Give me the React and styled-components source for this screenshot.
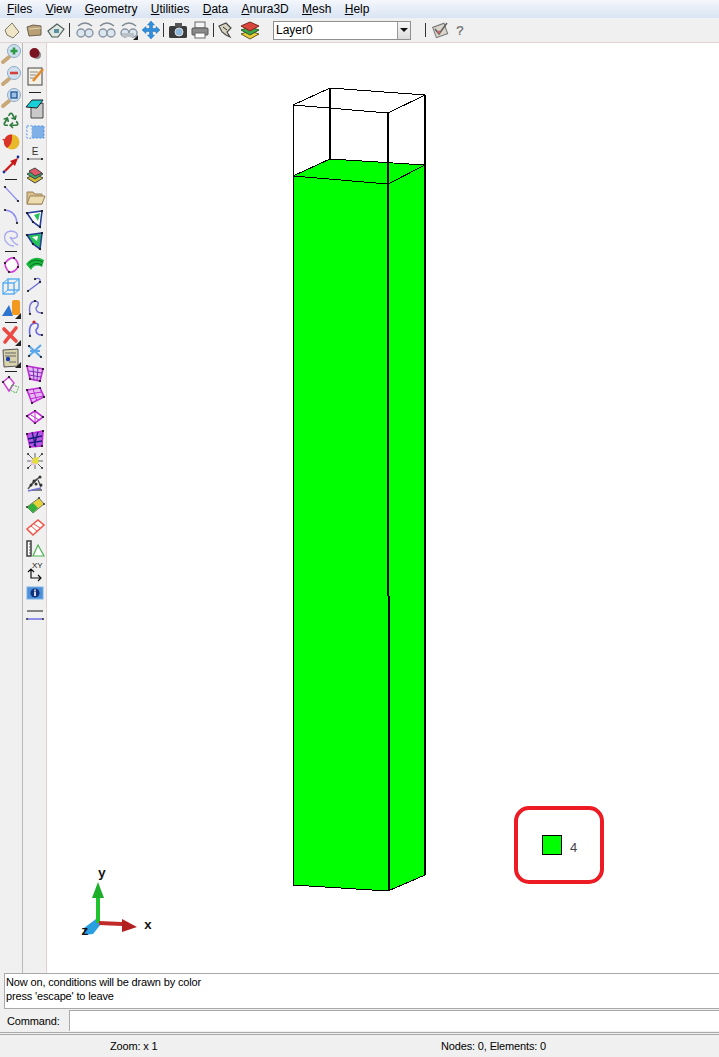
import React from 'react';
import styled, { createGlobalStyle } from 'styled-components';
import { Recycle } from 'lucide-react';

const GlobalStyle = createGlobalStyle`
  html, body {
    margin: 0;
    padding: 0;
    background: #f0f0f0;
    overflow: hidden;
  }
  body {
    font-family: "Liberation Sans", Arial, sans-serif;
  }
`;

const Window = styled.div`
  display: flex;
  flex-direction: column;
  width: 719px;
  height: 1057px;
  background: #f0f0f0;
  color: #000;
`;

const MenuBar = styled.div`
  display: flex;
  align-items: center;
  gap: 13.3px;
  height: 18px;
  padding-left: 7px;
  font-size: 12px;
  background: linear-gradient(#f4f7fc, #d9e4f3);
`;

const MenuItem = styled.span`
  &::first-letter {
    text-decoration: underline;
  }
  display: inline-block;
`;

const Toolbar = styled.div`
  display: flex;
  align-items: center;
  height: 24px;
  padding-left: 1px;
  background: #f0f0f0;
  border-bottom: 1px solid #e3d4d4;
`;

const ToolButton = styled.div`
  display: flex;
  align-items: center;
  justify-content: center;
  flex: none;
  width: ${p => p.$w || 22}px;
  height: 22px;
  margin-left: ${p => p.$ml || 0}px;
`;

const ToolSep = styled.div`
  flex: none;
  width: 1px;
  height: 14px;
  background: #333;
  margin: 0 ${p => p.$r || 0}px 0 ${p => p.$l || 0}px;
`;

const Combo = styled.div`
  display: flex;
  flex: none;
  width: 138px;
  height: 19px;
  margin: 0 14px 0 12px;
  box-sizing: border-box;
  border: 1px solid #8f8f8f;
  background: #fff;
  font-size: 12px;
`;

const ComboText = styled.div`
  flex: 1;
  padding-left: 2px;
  line-height: 17px;
`;

const ComboArrow = styled.div`
  display: flex;
  align-items: center;
  justify-content: center;
  width: 12px;
  background: linear-gradient(#f6f6f6, #dcdcdc);
  border-left: 1px solid #9a9a9a;
  &::after {
    content: '';
    border-left: 4px solid transparent;
    border-right: 4px solid transparent;
    border-top: 4px solid #111;
  }
`;

const Body = styled.div`
  display: flex;
  flex: 1;
  min-height: 0;
`;

const SideColumn = styled.div`
  display: flex;
  flex-direction: column;
  align-items: center;
  flex: none;
  width: ${p => p.$w}px;
  box-sizing: border-box;
  border-right: 1px solid ${p => p.$edge};
`;

const SideIcon = styled.div`
  display: flex;
  align-items: center;
  justify-content: center;
  flex: none;
  width: 22px;
  height: 22px;
`;

const SideSep = styled.div`
  flex: none;
  display: flex;
  align-items: center;
  justify-content: center;
  height: ${p => p.$h}px;
  &::after {
    content: '';
    width: 12px;
    height: 1px;
    background: #222;
  }
`;

const Canvas = styled.div`
  position: relative;
  flex: 1;
  background: #fff;
  overflow: hidden;
`;

const Scene = styled.svg`
  display: block;
  width: 672px;
  height: 930px;
`;

const Legend = styled.div`
  position: absolute;
  left: 467px;
  top: 763px;
  display: flex;
  align-items: center;
  gap: 8px;
  width: 90px;
  height: 78px;
  padding-left: 24px;
  box-sizing: border-box;
  border: 4px solid #ed1c24;
  border-radius: 15px;
  background: #fff;
`;

const Swatch = styled.div`
  width: 20px;
  height: 20px;
  box-sizing: border-box;
  border: 1px solid #000;
  background: #00ff00;
`;

const LegendText = styled.span`
  font-size: 13px;
  color: #444;
  padding-top: 5px;
`;

const Messages = styled.div`
  height: 36px;
  margin-left: 4px;
  padding: 1px 0 0 1px;
  box-sizing: border-box;
  background: #fff;
  border-top: 1px solid #a9a9a9;
  border-left: 1px solid #a9a9a9;
  border-bottom: 1px solid #a9a9a9;
  font-size: 11px;
  letter-spacing: -0.15px;
  line-height: 14px;
`;

const CommandRow = styled.div`
  display: flex;
  align-items: center;
  height: 23px;
  padding-left: 7px;
  font-size: 11px;
  letter-spacing: -0.15px;
`;

const CommandLabel = styled.label`
  width: 62px;
`;

const CommandInput = styled.div`
  flex: 1;
  height: 20px;
  background: #fff;
  border-top: 1px solid #a9a9a9;
  border-left: 1px solid #a9a9a9;
`;

const StatusBar = styled.div`
  display: flex;
  align-items: center;
  height: 25px;
  box-sizing: border-box;
  border-top: 3px double #a9a9a9;
  font-size: 11px;
  letter-spacing: -0.15px;
`;

const StatusZoom = styled.span`
  margin-left: 110px;
  width: 331px;
`;

const Ico = styled.svg`
  display: block;
  width: 22px;
  height: 22px;
`;

const Dots = ({ pts, r = 1.1, fill = '#111' }) =>
  pts.map(([x, y]) => <circle key={x + '-' + y} cx={x} cy={y} r={r} fill={fill} />);

const Corner = () => <polygon points="21,15 21,21 15,21" fill="#222" />;

const Lens = ({ children }) => (
  <>
    <path d="M3 19 L9 14" stroke="#c9a878" strokeWidth="4" strokeLinecap="round" />
    <circle cx="14" cy="8" r="6.5" fill="#cfe0ee" stroke="#8fa9c4" />
    {children}
  </>
);

const Glasses = ({ dir }) => (
  <>
    <path d={dir === 'l' ? 'M4 7 Q11 1 18 7' : 'M18 7 Q11 1 4 7'} fill="none" stroke="#7f8b96" strokeWidth="1.5" />
    <circle cx="7" cy="14" r="4" fill="#dbe6ef" stroke="#8995a3" strokeWidth="1.4" />
    <circle cx="15" cy="14" r="4" fill="#dbe6ef" stroke="#8995a3" strokeWidth="1.4" />
  </>
);

const Mesh = ({ stroke = '#c02bd6', fill = '#e4b8f0', pts }) => (
  <>
    <polygon points={pts} fill={fill} stroke={stroke} strokeWidth="1.6" />
    <Dots pts={pts.split(' ').map(p => p.split(',').map(Number))} />
  </>
);

const glyphs = {
  // top toolbar
  newFile: <><polygon points="4,11 11,4 18,13 12,19 6,16" fill="#efe6c8" stroke="#7d7a68" /></>,
  open: <><polygon points="4,8 10,6 18,7 18,16 6,17" fill="#b89f74" stroke="#6d6150" /><path d="M6 10 L18 9" stroke="#e0d2b0" /></>,
  save: <><polygon points="3,12 12,5 19,10 13,18 7,18" fill="#dfe7e2" stroke="#4a5a55" strokeWidth="1.1" /><rect x="9" y="10" width="5" height="4" fill="#5a8f9f" /></>,
  undo: <Glasses dir="l" />,
  redo: <Glasses dir="r" />,
  view: <><Glasses dir="l" /><rect x="4" y="14" width="12" height="4" fill="#b9c0c6" /><polygon points="20,16 20,21 15,21" fill="#222" /></>,
  move: <path d="M11 2 L14.5 6 H12.5 V9.5 H16 V7.5 L20 11 L16 14.5 V12.5 H12.5 V16 H14.5 L11 20 L7.5 16 H9.5 V12.5 H6 V14.5 L2 11 L6 7.5 V9.5 H9.5 V6 H7.5 Z" fill="#2f8fdc" stroke="#1c6cb0" strokeWidth="0.5" />,
  camera: <><rect x="2" y="7" width="18" height="12" rx="1.5" fill="#3b3b3b" /><rect x="8" y="4" width="7" height="4" fill="#555" /><circle cx="12" cy="13" r="4" fill="#8fb8dc" stroke="#ddd" /></>,
  printer: <><rect x="6" y="3" width="10" height="6" fill="#f4f4f4" stroke="#666" /><rect x="3" y="9" width="16" height="7" rx="1" fill="#8a8a8a" stroke="#555" /><rect x="6" y="14" width="10" height="5" fill="#fff" stroke="#666" /></>,
  tool: <><path d="M5 7 L12 4 L17 9 L13 13 L16 18 L12 16 L8 13 Z" fill="#d9d4c0" stroke="#444" strokeWidth="1.1" /><path d="M9 8 L13 11" stroke="#333" /></>,
  layers: <><polygon points="11,12 20,15 11,20 2,15" fill="#e8c93a" stroke="#665c22" /><polygon points="11,8 20,11 11,16 2,11" fill="#3fa648" stroke="#245c2a" /><polygon points="11,3 20,7 11,12 2,7" fill="#d9473c" stroke="#7a2620" /></>,
  check: <><rect x="5" y="6" width="12" height="11" fill="#d9d5cb" stroke="#777" transform="rotate(-20 11 11)" /><path d="M6 10 L10 15 L18 4" fill="none" stroke="#5f5f5f" strokeWidth="1.5" /><circle cx="10" cy="13" r="1.5" fill="#c66" /></>,

  // left column
  zoomIn: <Lens><path d="M14 4.5 V11.5 M10.5 8 H17.5" stroke="#2f9a45" strokeWidth="2.6" /></Lens>,
  zoomOut: <Lens><path d="M10 8 H18" stroke="#d4413c" strokeWidth="2.6" /></Lens>,
  zoomFit: <Lens><rect x="11" y="5" width="6" height="6" fill="#9cc0e6" stroke="#2a5f9a" strokeWidth="1.4" /></Lens>,
  sphere: <><circle cx="12" cy="11" r="7.5" fill="#e9b92c" /><path d="M12 3.5 A7.5 7.5 0 0 0 7 17 Q13 13 12 3.5" fill="#d9342a" /><polygon points="2,8 8,8 7,13" fill="#d9342a" /></>,
  redLine: <><path d="M5 18 L14 9" stroke="#d11f1f" strokeWidth="2.4" /><polygon points="18,5 15,13 10,8" fill="#c51818" /><Dots pts={[[18, 4], [4, 19]]} r={1.4} fill="#1b2f9c" /></>,
  line: <><path d="M5 4 L18 18" stroke="#8f8ff0" strokeWidth="1.2" /><Dots pts={[[5, 4], [18, 18]]} /></>,
  arc: <><path d="M5 5 Q16 6 17 18" fill="none" stroke="#8f8ff0" strokeWidth="1.4" /><Dots pts={[[5, 5], [17, 18]]} /></>,
  spiral: <path d="M5 13 Q3 5 11 4 Q19 5 17 10 Q13 13 10 10 M10 10 Q14 17 18 18 M5 13 Q8 19 14 19" fill="none" stroke="#a9a9ee" strokeWidth="1.4" />,
  diamond: <><path d="M5 9 Q10 3 14 4 Q19 8 18 13 Q14 19 9 18 Q5 14 5 9 Z" fill="#fff" stroke="#d03fd6" strokeWidth="1.6" /><Dots pts={[[5, 9], [14, 4], [18, 13], [9, 18]]} /></>,
  cube: <><rect x="3" y="7" width="11" height="11" fill="none" stroke="#4aa8f0" strokeWidth="1.3" /><rect x="8" y="3" width="11" height="11" fill="none" stroke="#4aa8f0" strokeWidth="1.3" /><path d="M3 7 L8 3 M14 7 L19 3 M3 18 L8 14 M14 18 L19 14" stroke="#4aa8f0" /></>,
  shapes: <><polygon points="2,18 9,7 13,18" fill="#2c74cf" /><rect x="12" y="2" width="8" height="15" rx="2" fill="#f29a1f" /><Corner /></>,
  cross: <><path d="M4 4 L16 16 M16 3 L5 17" stroke="#ea4a43" strokeWidth="3.6" strokeLinecap="round" /><Corner /></>,
  doc: <><polygon points="3,3 18,2 18,19 4,20" fill="#d8d3ac" stroke="#555" /><path d="M5 6 H16 M5 9 H16 M9 15 H16" stroke="#666" /><circle cx="8" cy="12" r="2.2" fill="#1f3fa8" /><Corner /></>,
  diamondGreen: <><polygon points="3,8 9,3 14,9 9,17" fill="#fff" stroke="#d03fd6" strokeWidth="1.5" /><path d="M12 11 L19 13 L16 19 L10 16 Z" fill="none" stroke="#4fb04f" strokeDasharray="2 1" /><Dots pts={[[3, 8], [9, 3]]} /></>,

  // right column
  point: <><circle cx="13" cy="12" r="4" fill="#8c8c8c" /><circle cx="10.5" cy="10" r="5" fill="#7a1420" /></>,
  notePad: <><rect x="4" y="3" width="14" height="17" fill="#f4f0e6" stroke="#444" /><path d="M6 7 H14 M6 10 H12 M6 13 H11" stroke="#888" /><path d="M9 16 L19 4" stroke="#e08a2c" strokeWidth="2.6" /></>,
  tealBox: <><polygon points="7,8 19,5 19,20 7,20" fill="#c9c9c9" stroke="#444" /><polygon points="2,9 8,2 19,2 13,10" fill="#16cfd8" stroke="#222" /></>,
  dashRect: <><rect x="3" y="6" width="17" height="12" fill="#7fb0e8" /><rect x="3" y="6" width="17" height="12" fill="none" stroke="#4f93e0" strokeDasharray="2 1.5" /><rect x="3" y="6" width="5" height="12" fill="#f0f0f0" stroke="#7fb0e8" strokeDasharray="2 1.5" /></>,
  letterE: <><text x="11" y="13" textAnchor="middle" fontFamily="Liberation Sans, sans-serif" fontSize="10" fill="#333">E</text><path d="M4 17 H18" stroke="#999" strokeWidth="1.5" /><Dots pts={[[4, 17], [18, 17]]} /></>,
  layerTool: <><polygon points="3,14 11,10 19,14 11,19" fill="#d4b93a" stroke="#444" /><polygon points="3,10 11,6 19,10 11,15" fill="#37a86a" stroke="#444" /><polygon points="5,7 11,4 18,9 11,12" fill="#e0596a" stroke="#444" /></>,
  folder: <><path d="M3 6 H9 L11 8 H18 V18 H3 Z" fill="#d8bf8c" stroke="#9a8458" /><polygon points="3,18 6,10 21,10 18,18" fill="#eddcb0" stroke="#9a8458" /></>,
  surf1: <><polygon points="3,5 18,3 16,19 9,14" fill="#fff" stroke="#2a3f9a" strokeWidth="1.6" /><polygon points="10,7 16,5 14,13" fill="#25c25a" /><Dots pts={[[3, 5], [18, 3], [16, 19], [9, 14]]} /></>,
  surf2: <><polygon points="3,5 18,3 16,19 9,14" fill="#25c25a" stroke="#2a3f9a" strokeWidth="1.6" /><polygon points="8,7 14,6 13,11" fill="#fff" /><Dots pts={[[3, 5], [18, 3], [16, 19], [9, 14]]} /></>,
  wave: <><path d="M2 12 Q10 2 20 8 L18 15 Q11 11 7 18 Z" fill="#18b53c" /><path d="M5 11 Q11 6 19 10 M6 15 Q11 9 18 13" stroke="#0b6f22" fill="none" /></>,
  curve1: <><path d="M4 17 L16 8 Q17 3 11 5" fill="none" stroke="#7272d8" strokeWidth="1.4" /><Dots pts={[[4, 17], [16, 8], [11, 5]]} /></>,
  curve2: <><path d="M6 18 Q4 6 11 5 Q17 6 12 12 Q12 17 18 17" fill="none" stroke="#7272d8" strokeWidth="1.4" /><Dots pts={[[6, 18], [11, 5], [18, 17]]} /></>,
  curve3: <><path d="M6 18 Q4 6 11 5 Q17 6 12 12 Q12 17 18 17" fill="none" stroke="#6a6ae0" strokeWidth="1.6" /><Dots pts={[[6, 18], [18, 17]]} /><circle cx="10" cy="4" r="1.6" fill="#d11f1f" /></>,
  snow: <><path d="M5 6 L17 17 M17 5 L5 16 M6 11 H16" stroke="#5aa8ea" strokeWidth="2" /><Dots pts={[[5, 6], [17, 17], [5, 16]]} /></>,
  mesh1: <><Mesh pts="3,4 19,7 16,19 6,17" /><path d="M5 9 L18 11 M5 13 L17 15 M9 5 L10 18 M14 6 L13 18" stroke="#7a2fb8" /></>,
  mesh2: <><Mesh pts="3,6 16,4 20,13 8,19" /><path d="M5 10 L18 8 M6 15 L19 12 M9 5 L13 17" stroke="#c02bd6" /></>,
  eye: <><Mesh fill="#fff" pts="3,10 11,5 19,11 11,17" /><path d="M7 9 L15 14 M11 5 L11 17" stroke="#c02bd6" /></>,
  mesh3: <><Mesh fill="#b05ae6" pts="3,6 19,3 18,18 6,19" /><path d="M4 11 L18 8 M5 15 L18 13 M8 4 L12 19 M14 4 L10 18" stroke="#1a1a7a" strokeWidth="1.3" /></>,
  star: <><path d="M4 4 L18 18 M18 4 L4 18 M11 3 V19 M3 11 H19" stroke="#666" /><circle cx="10" cy="12" r="3.5" fill="#e6c8e6" /><polygon points="9,8 15,7 14,14 8,13" fill="#e2de3a" /><Dots pts={[[4, 4], [18, 4], [4, 18], [18, 18]]} r={0.9} /></>,
  molecule: <><path d="M4 17 L10 9 L16 5 M8 18 H18 M14 8 L17 15" stroke="#555" strokeWidth="1.4" /><path d="M4 19 L17 16" stroke="#7272d8" strokeWidth="1.4" /><Dots pts={[[10, 9], [16, 5], [7, 13], [17, 13], [12, 12]]} r={1.5} fill="#333" /></>,
  plate: <><polygon points="3,13 15,4 20,10 9,19" fill="#e3d23a" stroke="#777" /><polygon points="3,13 9,9 14,14 9,19" fill="#35b03f" /><Dots pts={[[15, 4], [20, 10], [3, 13]]} r={1} fill="#333" /></>,
  eraser: <><polygon points="3,13 14,4 20,9 9,19" fill="#fff" stroke="#f0564c" strokeWidth="1.6" /><path d="M7 10 L13 15 M10 8 L16 12" stroke="#f0564c" /></>,
  barTri: <><rect x="3" y="3" width="4" height="15" fill="#fff" stroke="#333" strokeWidth="1.4" /><path d="M5 6 H7 M5 9 H7 M5 12 H7 M5 15 H7" stroke="#555" /><polygon points="14,7 20,18 9,18" fill="#fff" stroke="#4fb04f" strokeWidth="1.2" /></>,
  axes: <><path d="M7 9 V18 H17 M4 12 L7 9 L10 12 M14 15 L17 18 L14 21 M7 18 H17" fill="none" stroke="#111" strokeWidth="1.2" /><text x="8" y="8" fontFamily="Liberation Sans, sans-serif" fontSize="8" fill="#111">XY</text></>,
  info: <><rect x="3" y="5" width="16" height="12" fill="#4a8fd8" stroke="#7ab0e6" /><circle cx="11" cy="11" r="4.5" fill="#10307c" /><rect x="10.2" y="9.5" width="1.6" height="4.5" fill="#fff" /><rect x="10.2" y="7.5" width="1.6" height="1.4" fill="#fff" /></>,
  rails: <><path d="M3 7 H19" stroke="#555" strokeWidth="1.4" /><path d="M3 15 H19" stroke="#7878e6" strokeWidth="1.6" /><Dots pts={[[3, 15], [19, 15]]} r={1} fill="#333" /></>,
};

const Glyph = ({ name }) => <Ico viewBox="0 0 22 22">{glyphs[name]}</Ico>;

const Help = () => (
  <Ico viewBox="0 0 22 22">
    <text x="11" y="17" textAnchor="middle" fontFamily="Liberation Sans, sans-serif" fontSize="16" fill="#777" stroke="#555" strokeWidth="0.3">?</text>
  </Ico>
);

const menus = ['Files', 'View', 'Geometry', 'Utilities', 'Data', 'Anura3D', 'Mesh', 'Help'];

const leftIcons = [
  'zoomIn', 'zoomOut', 'zoomFit', 'recycle', 'sphere', 'redLine', { sep: 8 },
  'line', 'arc', 'spiral', { sep: 5 },
  'diamond', 'cube', 'shapes', { sep: 5 },
  'cross', 'doc', { sep: 5 },
  'diamondGreen',
];

const rightIcons = [
  'point', 'notePad', { sep: 11 },
  'tealBox', 'dashRect', 'letterE', 'layerTool', 'folder', 'surf1', 'surf2', 'wave',
  'curve1', 'curve2', 'curve3', 'snow', 'mesh1', 'mesh2', 'eye', 'mesh3', 'star',
  'molecule', 'plate', 'eraser', 'barTri', 'axes', 'info', 'rails',
];

function SideIcons({ items }) {
  return items.map((item, i) =>
    item.sep ? (
      <SideSep key={i} $h={item.sep} />
    ) : (
      <SideIcon key={i}>
        {item === 'recycle' ? <Recycle size={18} color="#2c7a3c" strokeWidth={2.2} /> : <Glyph name={item} />}
      </SideIcon>
    )
  );
}

function Model() {
  return (
    <Scene viewBox="47 43 672 930" shapeRendering="crispEdges">
      <polygon points="293,176 330,159 425,165 425,875 388,891 293,885" fill="#00ff00" />
      <g fill="none" stroke="#000">
        <path d="M293 105 L330 88 L425 95 L388 113 Z" />
        <path d="M293 105 V885 L388 891 L425 875" />
        <path d="M293 176 L330 159 L425 165 L388 184 Z" />
        <path d="M330 88 V159" strokeWidth="2" />
        <path d="M425 95 V875" strokeWidth="2" />
        <path d="M387.5 113 V596" strokeWidth="2" />
        <path d="M389 596 V891" strokeWidth="2" />
      </g>
      <g shapeRendering="auto">
        <polygon points="84,928 96,919 101,924 93,934 84,935" fill="#2a9fe0" />
        <rect x="96" y="893" width="4" height="30" fill="#22c22e" />
        <polygon points="98,882 104,898 92,898" fill="#1fae2a" />
        <polygon points="99,921 122,922 122,926 99,925" fill="#c22a2a" />
        <polygon points="122,919 137,927 122,932" fill="#b32020" />
        <g fontFamily="Liberation Mono, monospace" fontWeight="bold" fontSize="13" fill="#111" textAnchor="middle">
          <text x="102" y="877">y</text>
          <text x="148" y="929">x</text>
          <text x="85" y="935">z</text>
        </g>
      </g>
    </Scene>
  );
}

export default function App() {
  return (
    <Window>
      <GlobalStyle />
      <MenuBar>
        {menus.map(m => (
          <MenuItem key={m}>{m}</MenuItem>
        ))}
      </MenuBar>
      <Toolbar>
        <ToolButton><Glyph name="newFile" /></ToolButton>
        <ToolButton><Glyph name="open" /></ToolButton>
        <ToolButton><Glyph name="save" /></ToolButton>
        <ToolSep $l={2} $r={4} />
        <ToolButton><Glyph name="undo" /></ToolButton>
        <ToolButton><Glyph name="redo" /></ToolButton>
        <ToolButton><Glyph name="view" /></ToolButton>
        <ToolButton><Glyph name="move" /></ToolButton>
        <ToolSep $l={1} $r={3} />
        <ToolButton><Glyph name="camera" /></ToolButton>
        <ToolButton><Glyph name="printer" /></ToolButton>
        <ToolSep $l={2} />
        <ToolButton><Glyph name="tool" /></ToolButton>
        <ToolButton $ml={3}><Glyph name="layers" /></ToolButton>
        <Combo>
          <ComboText>Layer0</ComboText>
          <ComboArrow />
        </Combo>
        <ToolSep $r={3} />
        <ToolButton><Glyph name="check" /></ToolButton>
        <ToolButton $w={18}><Help /></ToolButton>
      </Toolbar>
      <Body>
        <SideColumn $w={23} $edge="#b9b9b9">
          <SideIcons items={leftIcons} />
        </SideColumn>
        <SideColumn $w={24} $edge="#e6cfcf">
          <SideIcons items={rightIcons} />
        </SideColumn>
        <Canvas>
          <Model />
          <Legend>
            <Swatch />
            <LegendText>4</LegendText>
          </Legend>
        </Canvas>
      </Body>
      <Messages>
        Now on, conditions will be drawn by color
        <br />
        press 'escape' to leave
      </Messages>
      <CommandRow>
        <CommandLabel>Command:</CommandLabel>
        <CommandInput />
      </CommandRow>
      <StatusBar>
        <StatusZoom>Zoom: x 1</StatusZoom>
        <span>Nodes: 0, Elements: 0</span>
      </StatusBar>
    </Window>
  );
}
